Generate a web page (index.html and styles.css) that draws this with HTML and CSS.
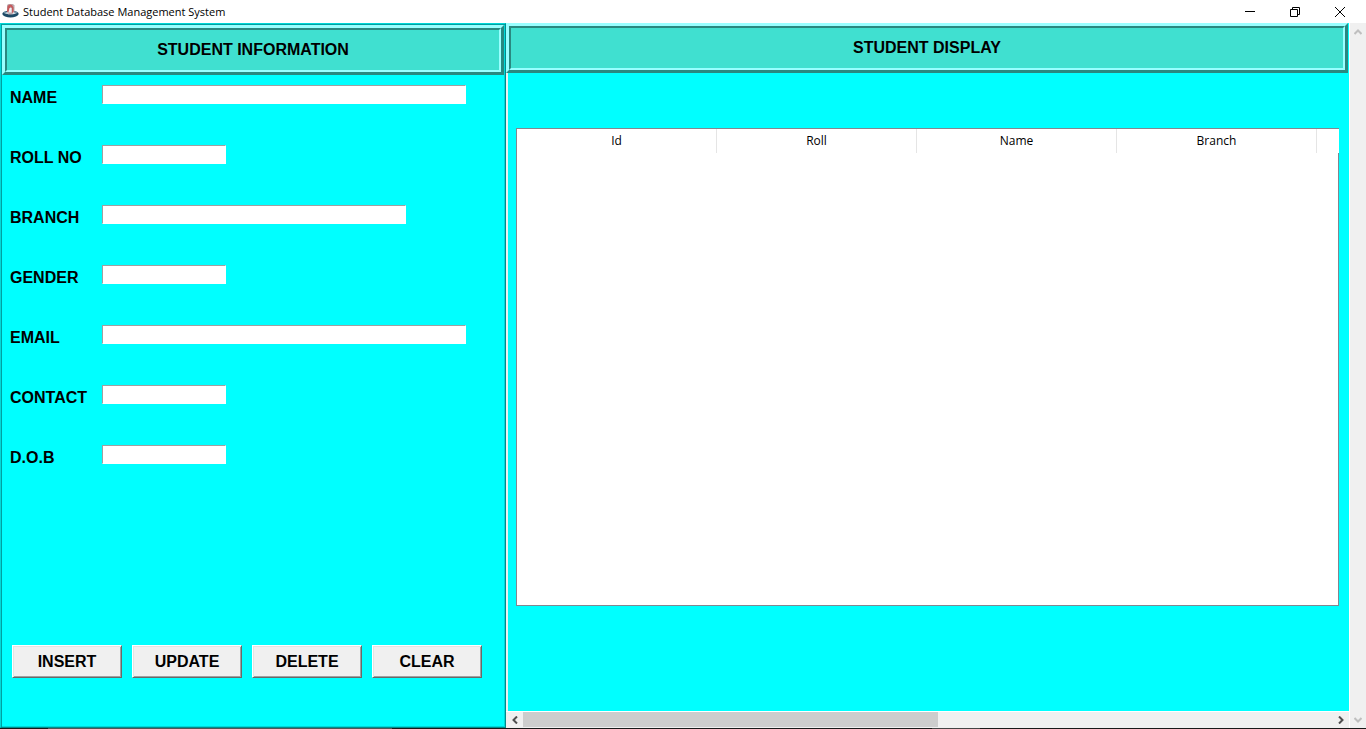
FILE: index.html
```html
<!DOCTYPE html>
<html lang="en">
<head>
<meta charset="utf-8">
<title>Student Database Management System</title>
<link rel="stylesheet" href="styles.css">
</head>
<body>
<div class="window">
  <header class="titlebar">
    <svg class="app-icon" width="17" height="16" viewBox="0 0 17 16" aria-hidden="true">
      <path d="M4 8 1 9.500Q-1 12 3 13.500Q8.500 15.300 14 13.500Q18 12 16 9.500L13 8Z" fill="#1d4a66"/>
      <path d="M1.500 9 4 8 6 11H3ZM15.500 9 13 8 11 11H14Z" fill="#7394a8"/>
      <path d="M5 2 6.500 1H11L12.500 2.500V10L10 11.500H6L5 9.500Z" fill="#bba9ae"/>
      <path d="M5.500 3.500Q7 .5 10 2L11.500 4.500V9.500L10 10V5L8 3.500V6L6.500 9H5Z" fill="#c65a5c"/>
      <path d="M7.500 5H9.500V9.500H6.500Z" fill="#f2eef2"/>
      <path d="M11 9 13.500 10.500 10.500 11.500ZM5 9 7 11 3.500 10.500Z" fill="#dce4ea"/>
    </svg>
    <h1 class="app-title">Student Database Management System</h1>
    <div class="window-controls">
      <button type="button" class="window-button" aria-label="Minimize">
        <svg width="10" height="10" viewBox="0 0 10 10"><path d="M0 4.500H10"/></svg>
      </button>
      <button type="button" class="window-button" aria-label="Restore">
        <svg width="10" height="10" viewBox="0 0 10 10"><path d="M.5 2.500H7.500V9.500H.5ZM2.500 2.500V.5H9.500V7.500H7.500"/></svg>
      </button>
      <button type="button" class="window-button" aria-label="Close">
        <svg width="10" height="10" viewBox="0 0 10 10"><path d="M0 0 10 10M10 0 0 10"/></svg>
      </button>
    </div>
  </header>
  <main class="workspace">
    <form class="info-panel">
      <h2 class="banner"><span class="banner-face">STUDENT INFORMATION</span></h2>
      <div class="fields">
        <div class="field"><label for="name">NAME</label><input class="entry entry-long" id="name" type="text"></div>
        <div class="field"><label for="roll">ROLL NO</label><input class="entry" id="roll" type="text"></div>
        <div class="field"><label for="branch">BRANCH</label><input class="entry entry-medium" id="branch" type="text"></div>
        <div class="field"><label for="gender">GENDER</label><input class="entry" id="gender" type="text"></div>
        <div class="field"><label for="email">EMAIL</label><input class="entry entry-long" id="email" type="text"></div>
        <div class="field"><label for="contact">CONTACT</label><input class="entry" id="contact" type="text"></div>
        <div class="field"><label for="dob">D.O.B</label><input class="entry" id="dob" type="text"></div>
      </div>
      <div class="actions">
        <button type="button" class="action">INSERT</button>
        <button type="button" class="action">UPDATE</button>
        <button type="button" class="action">DELETE</button>
        <button type="button" class="action">CLEAR</button>
      </div>
    </form>
    <section class="display-panel">
      <div class="display-content">
        <h2 class="banner"><span class="banner-face">STUDENT DISPLAY</span></h2>
        <div class="records">
          <table class="records-table">
            <thead>
              <tr><th scope="col">Id</th><th scope="col">Roll</th><th scope="col">Name</th><th scope="col">Branch</th><td></td></tr>
            </thead>
          </table>
          <div class="records-body"></div>
        </div>
      </div>
      <div class="scrollbar-x">
        <button type="button" class="scroll-button" aria-label="Scroll left">
          <svg width="6" height="8" viewBox="0 0 6 8"><path d="M5 .5 1.500 4 5 7.500"/></svg>
        </button>
        <div class="scroll-track"><div class="scroll-thumb"></div></div>
        <button type="button" class="scroll-button" aria-label="Scroll right">
          <svg width="6" height="8" viewBox="0 0 6 8"><path d="M1 .5 4.500 4 1 7.500"/></svg>
        </button>
      </div>
    </section>
    <div class="scrollbar-y">
      <button type="button" class="scroll-button" aria-label="Scroll up" disabled>
        <svg width="8" height="6" viewBox="0 0 8 6"><path d="M.5 5 4 1.500 7.500 5"/></svg>
      </button>
      <button type="button" class="scroll-button" aria-label="Scroll down" disabled>
        <svg width="8" height="6" viewBox="0 0 8 6"><path d="M.5 1 4 4.500 7.500 1"/></svg>
      </button>
    </div>
  </main>
  <footer class="window-edge"></footer>
</div>
</body>
</html>
```
FILE: styles.css
```css
* {
  box-sizing: border-box;
}

body {
  margin: 0;
  background: #fff;
  color: #000;
  font-family: "Liberation Sans", Arial, sans-serif;
}

button {
  font: inherit;
  color: inherit;
  padding: 0;
}

svg {
  display: block;
}

.window {
  display: flex;
  flex-direction: column;
  min-height: 100vh;
}

/* Title bar */
.titlebar {
  display: flex;
  align-items: center;
  height: 23px;
  padding: 0 4px 0 2px;
}

.app-icon {
  flex: none;
  margin-bottom: 2px;
}

.app-title {
  margin: 0 auto 0 4px;
  font: 11px/23px "Open Sans", "Segoe UI", sans-serif;
}

.window-controls {
  display: flex;
}

.window-button {
  display: grid;
  place-items: center;
  width: 45px;
  height: 20px;
  border: 0;
  background: none;
}

.window-button path {
  fill: none;
  stroke: #000;
}

/* Main area */
.workspace {
  display: grid;
  grid-template-columns: 506px 1fr 17px;
  flex: 1;
}

.banner {
  margin: 0;
  border: 3px solid;
  border-color: #9ff #2a8880 #2a8880 #9ff;
  font-size: 16px;
  line-height: 40px;
  text-align: center;
}

.banner-face {
  display: block;
  border: 2px solid;
  border-color: #2a8880 #9ff #9ff #2a8880;
  background: #40e0d0;
}

.info-panel {
  display: flex;
  flex-direction: column;
  border: 1px solid;
  border-color: #00d8d8 #008b8b #008b8b #00d8d8;
  box-shadow: inset 1px 1px #00a0a0, inset -1px -1px #00d8d8;
  background: #0ff;
  padding: 1px;
}

.fields {
  padding: 10px 0 0 8px;
}

.field {
  display: grid;
  grid-template-columns: 92px 1fr;
  align-items: start;
  height: 60px;
  font-size: 16px;
  font-weight: bold;
  line-height: 26px;
}

.entry {
  width: 124px;
  height: 19px;
  padding: 0 1px;
  border: 1px solid;
  border-color: #a0a0a0 #fff #fff #a0a0a0;
  background: #fff;
  font-size: 12px;
}

.entry-medium {
  width: 304px;
}

.entry-long {
  width: 364px;
}

.actions {
  display: flex;
  gap: 10px;
  margin-top: auto;
  padding: 0 0 48px 10px;
}

.action {
  width: 110px;
  height: 33px;
  border: 1px solid;
  border-color: #fff #696969 #696969 #fff;
  box-shadow: inset 1px 1px #e3e3e3, inset -1px -1px #a0a0a0;
  background: #f0f0f0;
  font-size: 16px;
  font-weight: bold;
}

/* Student display */
.display-panel {
  display: flex;
  flex-direction: column;
  min-width: 0;
  border-left: 2px solid #f0f0f0;
  background: #0ff;
}

.display-content {
  display: flex;
  flex-direction: column;
  flex: 1;
}

.display-content .banner {
  margin: 0 1px 0 -2px;
}

.records {
  display: flex;
  flex-direction: column;
  flex: 1;
  margin: 55px 10px 105px 8px;
  border-top: 1px solid #828790;
  border-left: 1px solid #828790;
  background: #fff;
}

.records-table {
  width: 100%;
  border-collapse: separate;
  border-spacing: 0;
  table-layout: fixed;
  font: 12px/24px "Open Sans", "Segoe UI", sans-serif;
}

.records-table th {
  width: 200px;
  padding: 0;
  border-right: 1px solid #e5e5e5;
  font-weight: normal;
}

.records-table td {
  padding: 0;
}

.records-body {
  flex: 1;
  border-right: 1px solid #828790;
  border-bottom: 1px solid #828790;
}

/* Scroll bars */
.scrollbar-x {
  display: flex;
  height: 17px;
  margin-left: -2px;
  border-top: 1px solid #fff;
  background: #f0f0f0;
}

.scrollbar-y {
  display: flex;
  flex-direction: column;
  justify-content: space-between;
  border-left: 1px solid #fff;
  background: #f0f0f0;
}

.scroll-button {
  display: grid;
  place-items: center;
  flex: none;
  width: 17px;
  height: 16px;
  border: 0;
  background: none;
}

.scrollbar-y .scroll-button {
  width: 16px;
  height: 17px;
}

.scroll-button path {
  fill: none;
  stroke: #505050;
  stroke-width: 2;
}

.scroll-button:disabled path {
  stroke: #bfbfbf;
}

.scroll-track {
  flex: 1;
}

.scroll-thumb {
  width: 51.3%;
  height: 15px;
  background: #cdcdcd;
}

.window-edge {
  height: 1px;
  background: linear-gradient(90deg, #181818 48px, #555 48px 392px, #181818 392px 932px, #444 932px 980px, #181818 980px);
}
```
